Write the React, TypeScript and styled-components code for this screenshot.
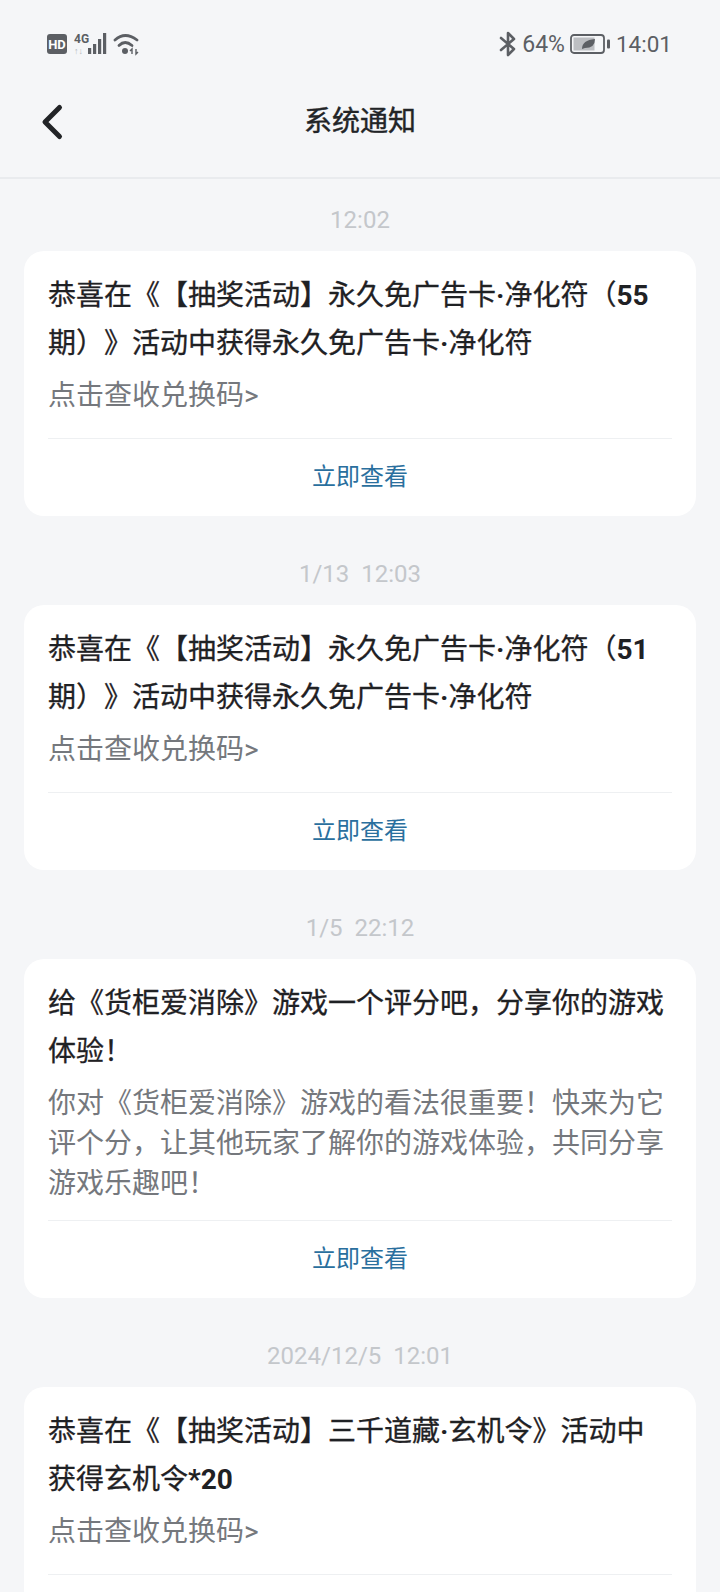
import React from "react";
import styled, { createGlobalStyle } from "styled-components";

const Global = createGlobalStyle`
  html, body { margin: 0; padding: 0; background: #f5f6f8; }
  #root { width: 720px; height: 1592px; overflow: hidden; }
`;

const Page = styled.div`
  width: 720px;
  height: 1592px;
  overflow: hidden;
  background: #f5f6f8;
  font-family: Roboto, "Noto Sans CJK SC", sans-serif;
  text-spacing-trim: space-all;
`;

const StatusBar = styled.div`
  height: 88px;
  box-sizing: border-box;
  padding: 0 48px 0 47px;
  display: flex;
  align-items: center;
  justify-content: space-between;
  color: #5c5f64;
`;

const StatusGroup = styled.div`
  display: flex;
  align-items: center;
  gap: 5px;
  font-size: 23px;
`;

const Clock = styled.span`
  font-size: 22.5px;
  margin-left: -1px;
`;

const Nav = styled.div`
  height: 91px;
  box-sizing: border-box;
  padding: 0 0 0 40px;
  display: flex;
  align-items: center;
  position: relative;
  border-bottom: 2px solid #e9ebee;
`;

const NavTitle = styled.div`
  position: absolute;
  left: 0;
  right: 0;
  top: 14px;
  line-height: 40px;
  text-align: center;
  font-size: 28px;
  font-weight: 400;
  color: #222427;
  -webkit-text-stroke: 0.4px #222427;
`;

const BackIcon = styled.svg`
  width: 26px;
  height: 40px;
  margin-bottom: 21px;
`;

const List = styled.div`
  padding: 0 24px;
`;

const Stamp = styled.div`
  height: 72px;
  line-height: 82px;
  text-align: center;
  font-size: 24px;
  color: #c4c7cb;
  white-space: pre;
`;

const Card = styled.div`
  background: #fff;
  border-radius: 20px;
  padding: 21px 24px 0;
  margin-bottom: 17px;
`;

const Title = styled.div`
  font-size: 28px;
  line-height: 48px;
  font-weight: 400;
  color: #1f2124;
  padding-right: 2px;
  -webkit-text-stroke: 0.3px #1f2124;
`;

const TitleLatin = styled.span`
  font-weight: 700;
  -webkit-text-stroke: 0;
`;

const Desc = styled.div`
  font-size: 28px;
  line-height: 40px;
  min-height: 46px;
  margin-top: 8px;
  color: #75787d;
`;

const Action = styled.div`
  margin-top: 16px;
  border-top: 1px solid #eef0f2;
  height: 77px;
  line-height: 77px;
  text-align: center;
  font-size: 24px;
  color: #2a6f9e;
`;

const messages = [
  {
    time: "12:02",
    title: ["恭喜在《【抽奖活动】永久免广告卡", "·", "净化符（", "55", "期）》活动中获得永久免广告卡", "·", "净化符"],
    desc: "点击查收兑换码>",
  },
  {
    time: "1/13  12:03",
    title: ["恭喜在《【抽奖活动】永久免广告卡", "·", "净化符（", "51", "期）》活动中获得永久免广告卡", "·", "净化符"],
    desc: "点击查收兑换码>",
  },
  {
    time: "1/5  22:12",
    title: ["给《货柜爱消除》游戏一个评分吧，分享你的游戏体验！"],
    desc: "你对《货柜爱消除》游戏的看法很重要！快来为它评个分，让其他玩家了解你的游戏体验，共同分享游戏乐趣吧！",
  },
  {
    time: "2024/12/5  12:01",
    title: ["恭喜在《【抽奖活动】三千道藏", "·", "玄机令》活动中获得玄机令", "*20"],
    desc: "点击查收兑换码>",
  },
];

const LeftIcons = () => (
  <svg width="94" height="28" viewBox="0 0 94 28">
    <rect x="0" y="4" width="20" height="20" rx="3" fill="#5c5f64" />
    <text x="10" y="18.5" textAnchor="middle" fontSize="13" fontWeight="700" fill="#fff" fontFamily="Roboto">HD</text>
    <text x="27" y="12.5" fontSize="12" fontWeight="700" fill="#5c5f64" fontFamily="Roboto">4G</text>
    <text x="27" y="23.5" fontSize="9" fill="#b4b6ba" fontFamily="Roboto">↑↓</text>
    <rect x="41" y="18" width="3.2" height="6" fill="#5c5f64" />
    <rect x="46" y="14" width="3.2" height="10" fill="#5c5f64" />
    <rect x="51" y="9" width="3.2" height="15" fill="#5c5f64" />
    <rect x="56" y="3" width="3.2" height="21" fill="#5c5f64" />
    <g fill="none" stroke="#5c5f64" strokeWidth="2.8" strokeLinecap="round">
      <path d="M68 10 Q78 1 90 10" />
      <path d="M72 15.5 Q78 9.5 85 15.5" />
    </g>
    <circle cx="78" cy="21" r="3" fill="#5c5f64" />
    <path d="M85 24 v-5 l-2 2 M89 19 v5 l2-2" stroke="#5c5f64" strokeWidth="1.4" fill="none" />
  </svg>
);

const Bluetooth = () => (
  <svg width="18" height="26" viewBox="0 0 18 26" fill="none" stroke="#5c5f64" strokeWidth="2.6" strokeLinecap="round" strokeLinejoin="round">
    <path d="M2 7 L15 18 L9 24 V2 L15 8 L2 19" />
  </svg>
);

const Battery = () => (
  <svg width="42" height="22" viewBox="0 0 42 22">
    <rect x="1" y="2" width="33" height="18" rx="3" fill="none" stroke="#5c5f64" strokeWidth="1.8" />
    <rect x="3.5" y="4.5" width="21" height="13" fill="#bcbec2" />
    <path d="M12 16 Q12 7 25 6 Q25 15 15 15 Z" fill="#5c5f64" />
    <rect x="37" y="6.5" width="3" height="9" rx="1" fill="#5c5f64" />
  </svg>
);

export default function App() {
  return (
    <Page>
      <Global />
      <StatusBar>
        <LeftIcons />
        <StatusGroup>
          <Bluetooth />
          <span>64%</span>
          <Battery />
          <Clock>14:01</Clock>
        </StatusGroup>
      </StatusBar>
      <Nav>
        <BackIcon viewBox="0 0 26 40" fill="none" stroke="#222427" strokeWidth="5" strokeLinecap="round" strokeLinejoin="round">
          <path d="M19.5 5.5 L5 20 L19.5 34.5" />
        </BackIcon>
        <NavTitle>系统通知</NavTitle>
      </Nav>
      <List>
        {messages.map((m) => (
          <React.Fragment key={m.time}>
            <Stamp>{m.time}</Stamp>
            <Card>
              <Title>
                {m.title.map((part, i) =>
                  i % 2 === 1 ? <TitleLatin key={i}>{part}</TitleLatin> : part
                )}
              </Title>
              <Desc>{m.desc}</Desc>
              <Action>立即查看</Action>
            </Card>
          </React.Fragment>
        ))}
      </List>
    </Page>
  );
}
